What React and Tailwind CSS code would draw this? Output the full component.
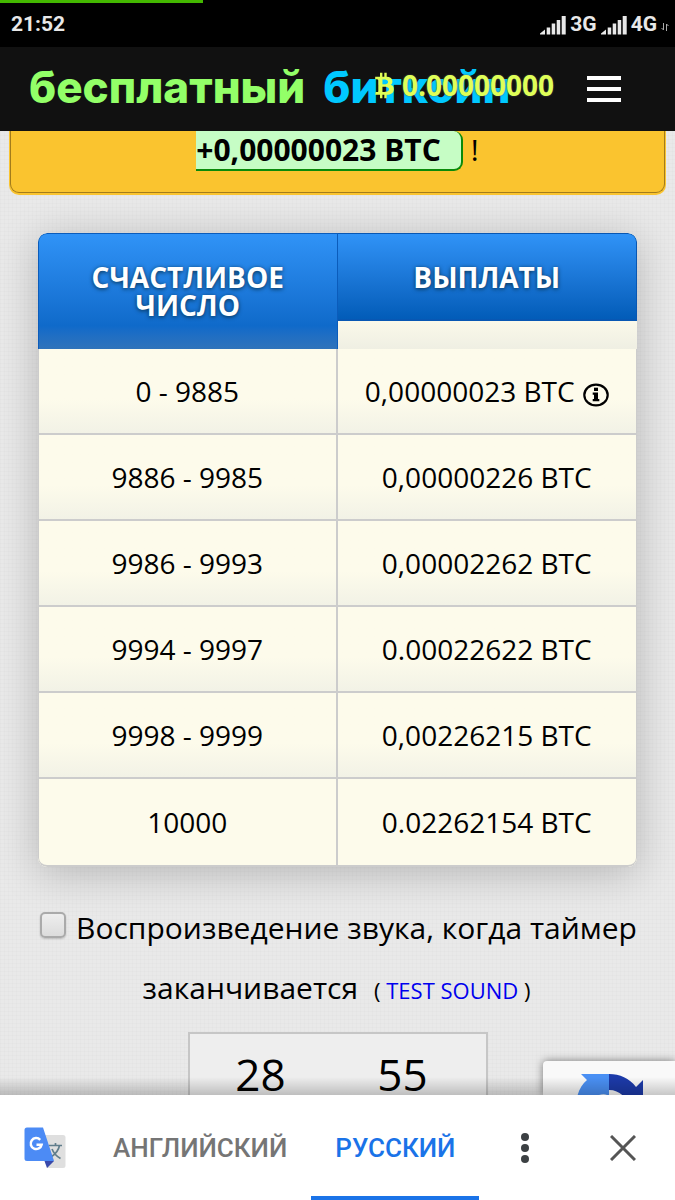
import React from 'react';
import { FaBtc } from 'react-icons/fa';

const payouts = [
  { range: '0 - 9885', amount: '0,00000023 BTC', info: true },
  { range: '9886 - 9985', amount: '0,00000226 BTC' },
  { range: '9986 - 9993', amount: '0,00002262 BTC' },
  { range: '9994 - 9997', amount: '0.00022622 BTC' },
  { range: '9998 - 9999', amount: '0,00226215 BTC' },
  { range: '10000', amount: '0.02262154 BTC' },
];

const SignalIcon = () => (
  <svg width="26" height="19" viewBox="0 0 26 19" fill="#e8e8e8" aria-hidden="true">
    <path d="M0 18.500v-1l5-4v5z" />
    <rect x="6.700" y="11.500" width="3.500" height="7" />
    <rect x="11.700" y="7.500" width="3.500" height="11" />
    <rect x="16.700" y="4" width="3.500" height="14.500" />
    <rect x="21.700" y="0" width="4" height="18.500" />
  </svg>
);

const InfoIcon = () => (
  <svg width="26" height="24" viewBox="0 0 26 24" aria-hidden="true">
    <ellipse cx="13" cy="12" rx="11.700" ry="10.400" fill="none" stroke="#000" strokeWidth="2.200" />
    <rect x="11" y="4.700" width="4" height="3.300" />
    <path d="M9.700 9.500h5.300v6.500h1.300v2.300H9.700V16H11v-4.200H9.700z" />
  </svg>
);

const TranslateIcon = () => (
  <svg width="42" height="42" viewBox="0 0 42 42" aria-hidden="true">
    <path d="M20 8h19a2.500 2.500 0 0 1 2.500 2.500v28A2.500 2.500 0 0 1 39 41H23z" fill="#dfdfdf" />
    <path d="M21 8l9 26-7 7 4-7z" fill="#c9c9c9" />
    <g fill="none" stroke="#607d8b" strokeWidth="1.700">
      <path d="M25 18.500h13M31.500 16v2.500M35.500 18.500c-1 5-4.500 9-8.500 11.500M28 22c1.500 4 5 7.500 8.500 9.500" />
    </g>
    <path d="M20.500 34H30l-7 7z" fill="#3949ab" />
    <path d="M3 .500h16l11 33.500H3A2.500 2.500 0 0 1 .500 31.500V3A2.500 2.500 0 0 1 3 .500z" fill="#4c8bf5" />
    <path d="M16.200 12.800a5.500 5.500 0 1 0 1.400 4.900h-5.100" fill="none" stroke="#fff" strokeWidth="2.500" />
  </svg>
);

const RecaptchaIcon = () => (
  <svg width="68" height="68" viewBox="0 0 68 68" aria-hidden="true">
    <path d="M33 0H5l6 6C4 12 0 21 0 34h15c1-6 3-11 8-13 4-1 7-1 10 1z" fill="#4a90f4" />
    <path d="M33 0c11 0 20 4 27 13l7-7v28H41l9-9c-4-5-9-9-17-9z" fill="#1c3aa9" />
    <path d="M0 34c0 19 15 34 34 34 10 0 19-4 25-11L47 46c-8 9-20 5-25-3l9-9z" fill="#ababab" />
  </svg>
);

const StatusBar = () => (
  <div className="h-[47px] bg-black text-[#e8e8e8]">
    <div className="h-[3px] w-[30%] bg-[#43b800]" />
    <div className="flex h-[44px] items-center justify-between pl-[11px] pr-[6px] font-['Roboto',sans-serif] text-[21px] font-bold">
      <span>21:52</span>
      <div className="flex items-center gap-1">
        <SignalIcon />
        <span>3G</span>
        <SignalIcon />
        <span>4G</span>
        <svg width="8" height="8" viewBox="0 0 8 8" stroke="#aaa" fill="none" className="mt-1" aria-hidden="true">
          <path d="M0.500 5l2 2V0M7.500 3l-2-2v7" />
        </svg>
      </div>
    </div>
  </div>
);

const NavBar = () => (
  <nav className="relative flex h-[84px] items-center justify-between bg-[#111] pl-[29px] pr-[54px]">
    <a
      href="#home"
      className="flex gap-[18px] whitespace-nowrap pb-1 font-['Inter',sans-serif] text-[44px] font-extrabold leading-[48px] text-[#93ff68]"
    >
      <span>бесплатный</span>
      <span className="text-[#00c8ff]">биткойн</span>
    </a>
    <div className="absolute right-[121px] top-[18px] flex items-center gap-2 text-[28px] font-bold leading-[40px] text-[#dfff57] [text-shadow:0_0_2px_#555]">
      <FaBtc className="h-[27px] w-[19px]" />
      <span>0.00000000</span>
    </div>
    <button type="button" aria-label="Menu" className="flex w-[34px] flex-col gap-[7px]">
      <span className="h-1 bg-white" />
      <span className="h-1 bg-white" />
      <span className="h-1 bg-white" />
    </button>
  </nav>
);

const PayoutTable = () => (
  <table className="w-full table-fixed border-separate border-spacing-0 overflow-hidden rounded-[9px] bg-[#fdfbeb] text-center text-[28px] leading-[40px] shadow-[0_6px_40px_rgba(0,0,0,0.22)]">
    <thead>
      <tr className="align-top leading-[28px] text-white [text-shadow:0_1px_4px_#06304d]">
        <th className="rounded-tl-[9px] border border-b-0 border-[#0b5cbb] bg-linear-to-b from-[#3093f7] via-[#0f6aca] via-80% to-[#2f73ba] px-8 pb-[30px] pt-[29px] font-bold">
          СЧАСТЛИВОЕ ЧИСЛО
        </th>
        <th className="bg-linear-to-b from-[#fdfbeb] from-70% to-[#efefe3] p-0 font-bold">
          <div className="rounded-tr-[9px] border border-b-2 border-l-0 border-[#0857b3] bg-linear-to-b from-[#3093f7] to-[#025cb8] pb-[28px] pt-[29px]">
            ВЫПЛАТЫ
          </div>
        </th>
      </tr>
    </thead>
    <tbody className="[&>tr:last-child>td]:h-[88px] [&>tr:last-child>td]:bg-none [&>tr:last-child>td:first-child]:rounded-bl-[9px] [&>tr:last-child>td:last-child]:rounded-br-[9px]">
      {payouts.map((row) => (
        <tr key={row.range}>
          <td className="h-[86px] border-b-2 border-l border-r-2 border-[#ccc] bg-linear-to-b from-[#fdfbeb] from-60% to-[#f2f2e6] p-0">
            {row.range}
          </td>
          <td className="h-[86px] border-b-2 border-r border-[#ccc] bg-linear-to-b from-[#fdfbeb] from-60% to-[#f2f2e6] p-0">
            <span className="flex items-center justify-center gap-2">
              {row.amount}
              {row.info && (
                <button type="button" aria-label="Info" className="pt-2">
                  <InfoIcon />
                </button>
              )}
            </span>
          </td>
        </tr>
      ))}
    </tbody>
  </table>
);

const TranslateBar = () => (
  <div className="relative flex h-[105px] shrink-0 items-stretch bg-white pl-6 font-['Roboto',sans-serif] text-[26px] font-medium">
    <div className="absolute inset-x-0 bottom-full h-[18px] bg-linear-to-t from-black/20 to-transparent" />
    <div className="mr-[23px] flex items-center">
      <TranslateIcon />
    </div>
    <button type="button" className="border-b-4 border-transparent px-6 pt-[6px] text-[#757575]">
      АНГЛИЙСКИЙ
    </button>
    <button type="button" className="border-b-4 border-[#1a73e8] px-6 pt-[6px] text-[#1a73e8]">
      РУССКИЙ
    </button>
    <button type="button" aria-label="More" className="flex w-[92px] items-center justify-center">
      <svg width="10" height="32" viewBox="0 0 10 32" fill="#3c4043">
        <circle cx="5" cy="5" r="4" />
        <circle cx="5" cy="16" r="4" />
        <circle cx="5" cy="27" r="4" />
      </svg>
    </button>
    <button type="button" aria-label="Close" className="flex flex-1 items-center justify-center">
      <svg width="26" height="26" viewBox="0 0 26 26" stroke="#555" strokeWidth="3">
        <path d="M1 1l24 24M25 1L1 25" />
      </svg>
    </button>
  </div>
);

export default function App() {
  return (
    <div className="flex h-screen flex-col overflow-hidden font-['Open_Sans',sans-serif] text-black">
      <header className="shrink-0">
        <StatusBar />
        <NavBar />
      </header>

      <main className="relative min-h-0 flex-1 overflow-hidden bg-[#e9e9e9] bg-[linear-gradient(#00000003_1px,transparent_1px),linear-gradient(90deg,#00000003_1px,transparent_1px)] bg-size-[4px_4px]">
        <div className="mx-[10px] flex items-start justify-center rounded-b-[9px] border border-t-0 border-[#a37c1b] bg-[#fac42f] pb-[21px] text-[30px] leading-[38px] shadow-[0_1px_0_1px_#fac42f]">
          <strong className="rounded-r-[9px] border-b-2 border-r-2 border-[#0a8a0a] bg-[#c6fdc5] pr-5 font-bold">
            +0,00000023 BTC
          </strong>
          <span className="pl-2">!</span>
        </div>

        <div className="mt-10 px-[38px]">
          <PayoutTable />
        </div>

        <div className="mt-[31px] pl-[26px] pr-6 text-center text-[30px] leading-[60px]">
          <input
            id="sound"
            type="checkbox"
            className="mr-[10px] size-[26px] appearance-none rounded-[5px] border-2 border-[#aaa] bg-linear-to-b from-[#eee] to-[#dcdcdc] align-[1px] shadow-[0_1px_2px_rgba(0,0,0,0.2)]"
          />
          <label htmlFor="sound">Воспроизведение звука, когда таймер заканчивается</label>
          <span className="ml-4 mr-1 text-[22px]">
            ( <a href="#test-sound" className="text-[#0000ee]">TEST SOUND</a> )
          </span>
        </div>

        <div className="mx-auto mt-3 flex h-[140px] w-[300px] border-2 border-[#c6c6c6] bg-[#eee] pr-3 text-center text-[44px] leading-[80px]">
          <span className="flex-1">28</span>
          <span className="flex-1">55</span>
        </div>

        <div className="absolute bottom-0 right-0 h-[34px] w-[132px] overflow-hidden rounded-tl-[4px] bg-[#f9f9f9] pl-[33px] pt-[13px] shadow-[0_0_8px_#777]">
          <RecaptchaIcon />
        </div>
      </main>

      <TranslateBar />
    </div>
  );
}
